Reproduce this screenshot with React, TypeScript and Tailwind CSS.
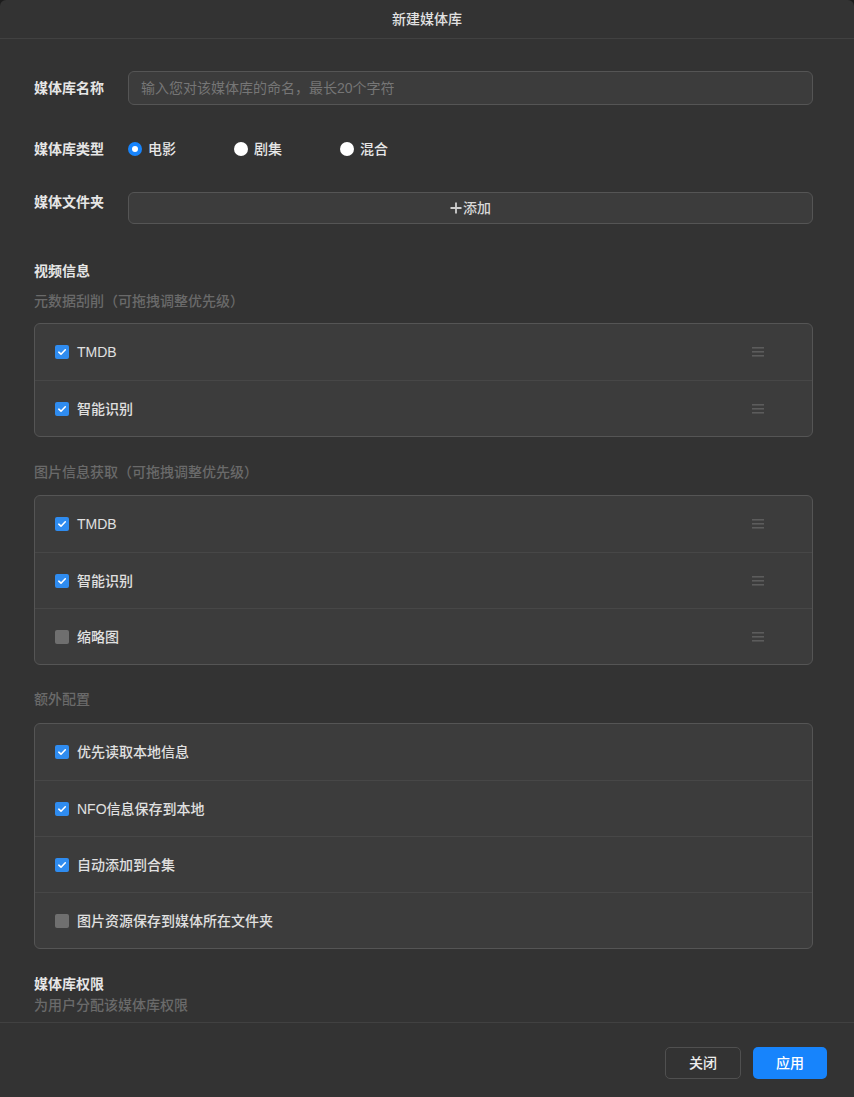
import React from "react";

const FONT = { fontFamily: '"Liberation Sans", "Noto Sans CJK SC", sans-serif' };

function DragHandle() {
  return (
    <svg width="12" height="12" viewBox="0 0 12 12" className="shrink-0">
      <rect x="0" y="1" width="12" height="1.6" fill="#5c5c5c" />
      <rect x="0" y="5" width="12" height="1.6" fill="#5c5c5c" />
      <rect x="0" y="9" width="12" height="1.6" fill="#5c5c5c" />
    </svg>
  );
}

function Check({ on }: { on: boolean }) {
  if (!on) {
    return <span className="block w-[14px] h-[14px] rounded-[2px] bg-[#6f6f6f] shrink-0" />;
  }
  return (
    <span className="flex items-center justify-center w-[14px] h-[14px] rounded-[2px] bg-[#2f8cf0] shrink-0">
      <svg width="10" height="10" viewBox="0 0 10 10">
        <path d="M1.8 5.2 L4 7.2 L8.3 2.8" fill="none" stroke="#fff" strokeWidth="1.6" strokeLinecap="round" strokeLinejoin="round" />
      </svg>
    </span>
  );
}

function Radio({ on, label }: { on: boolean; label: string }) {
  return (
    <div className="flex items-center w-[106px]">
      {on ? (
        <span className="flex items-center justify-center w-[14px] h-[14px] rounded-full bg-[#1784fc]">
          <span className="w-[6px] h-[6px] rounded-full bg-white" />
        </span>
      ) : (
        <span className="w-[14px] h-[14px] rounded-full bg-white" />
      )}
      <span className="ml-[6px] text-[14px] leading-[20px] text-[#e6e6e6] font-medium">{label}</span>
    </div>
  );
}

type Item = { label: string; on: boolean };

function OptionList({ items, drag }: { items: Item[]; drag: boolean }) {
  return (
    <div className="rounded-[6px] border border-[#555555] bg-[#3c3c3c] overflow-hidden">
      {items.map((it, i) => (
        <div
          key={it.label}
          className={
            "flex items-center h-[56px] pl-[20px] " + (i > 0 ? "border-t border-[#474747]" : "")
          }
        >
          <Check on={it.on} />
          <span className="ml-[8px] text-[14px] leading-[20px] text-[#e0e0e0] font-medium flex-1">{it.label}</span>
          {drag && (
            <div className="w-[60px] flex">
              <DragHandle />
            </div>
          )}
        </div>
      ))}
    </div>
  );
}

export default function App() {
  return (
    <div className="w-[854px] h-[1097px] bg-[#1c1c1c]" style={FONT}>
      <div className="flex flex-col w-full h-full bg-[#333333] rounded-t-[6px] overflow-hidden">
        {/* header */}
        <div className="h-[39px] shrink-0 flex items-center justify-center border-b border-[#414141]">
          <span className="text-[14px] leading-[20px] text-[#e2e2e2] font-medium">新建媒体库</span>
        </div>

        {/* scrolling body */}
        <div className="flex-1 overflow-hidden pl-[34px] pr-[41px] pt-[32px]">
          <div className="flex items-center">
            <span className="w-[94px] text-[14px] leading-[20px] text-[#e6e6e6] font-semibold">媒体库名称</span>
            <div className="flex-1 h-[34px] rounded-[6px] border border-[#555555] bg-[#3c3c3c] flex items-center px-[12px]">
              <span className="text-[14px] leading-[20px] text-[#767676]">输入您对该媒体库的命名，最长20个字符</span>
            </div>
          </div>

          <div className="flex items-center mt-[34px]">
            <span className="w-[94px] text-[14px] leading-[20px] text-[#e6e6e6] font-semibold">媒体库类型</span>
            <Radio on label="电影" />
            <Radio on={false} label="剧集" />
            <Radio on={false} label="混合" />
          </div>

          <div className="flex items-start mt-[33px]">
            <span className="w-[94px] text-[14px] leading-[20px] text-[#e6e6e6] font-semibold">媒体文件夹</span>
            <div className="flex-1 h-[32px] rounded-[6px] border border-[#555555] bg-[#3c3c3c] flex items-center justify-center">
              <svg width="12" height="12" viewBox="0 0 12 12" className="mr-[1px]">
                <path d="M6 0.5 V11.5 M0.5 6 H11.5" stroke="#cfcfcf" strokeWidth="1.8" />
              </svg>
              <span className="text-[14px] leading-[20px] text-[#d8d8d8] font-medium">添加</span>
            </div>
          </div>

          <div className="mt-[37px] text-[14px] leading-[20px] text-[#e6e6e6] font-semibold">视频信息</div>
          <div className="mt-[10px] text-[14px] leading-[20px] text-[#6a6a6a] font-medium">元数据刮削（可拖拽调整优先级）</div>
          <div className="mt-[12px]">
            <OptionList
              drag
              items={[
                { label: "TMDB", on: true },
                { label: "智能识别", on: true },
              ]}
            />
          </div>

          <div className="mt-[25px] text-[14px] leading-[20px] text-[#6a6a6a] font-medium">图片信息获取（可拖拽调整优先级）</div>
          <div className="mt-[13px]">
            <OptionList
              drag
              items={[
                { label: "TMDB", on: true },
                { label: "智能识别", on: true },
                { label: "缩略图", on: false },
              ]}
            />
          </div>

          <div className="mt-[24px] text-[14px] leading-[20px] text-[#6a6a6a] font-medium">额外配置</div>
          <div className="mt-[14px]">
            <OptionList
              drag={false}
              items={[
                { label: "优先读取本地信息", on: true },
                { label: "NFO信息保存到本地", on: true },
                { label: "自动添加到合集", on: true },
                { label: "图片资源保存到媒体所在文件夹", on: false },
              ]}
            />
          </div>

          <div className="mt-[25px] text-[14px] leading-[20px] text-[#e6e6e6] font-semibold">媒体库权限</div>
          <div className="mt-[1px] text-[14px] leading-[20px] text-[#6a6a6a] font-medium">为用户分配该媒体库权限</div>
        </div>

        {/* footer */}
        <div className="h-[75px] shrink-0 border-t border-[#414141] flex items-start justify-end pr-[27px] pt-[24px] gap-[12px]">
          <button className="w-[76px] h-[32px] rounded-[5px] border border-[#505050] bg-transparent text-[14px] text-[#ededed] font-medium">
            关闭
          </button>
          <button className="w-[74px] h-[32px] rounded-[5px] bg-[#1784fc] text-[14px] text-white font-medium">
            应用
          </button>
        </div>
      </div>
    </div>
  );
}
